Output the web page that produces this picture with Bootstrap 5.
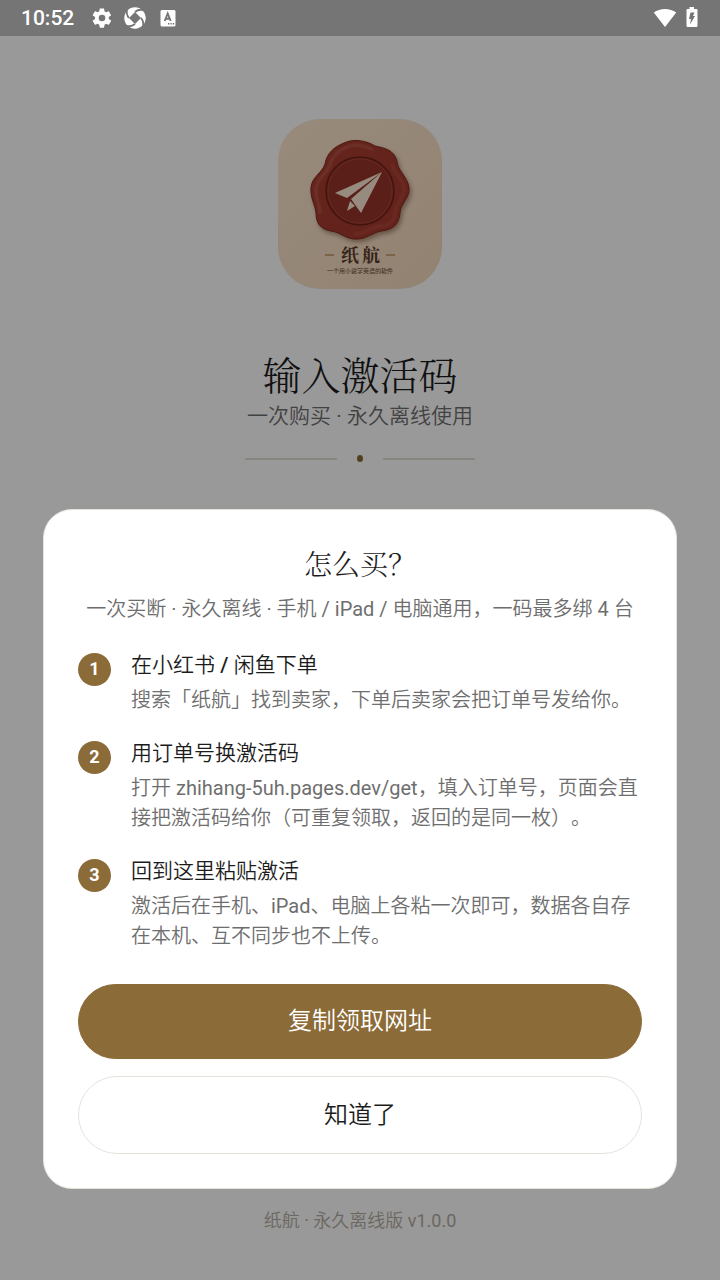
<!DOCTYPE html>
<html lang="zh-CN">
<head>
<meta charset="utf-8">
<meta name="viewport" content="width=device-width, initial-scale=1">
<title>纸航 · 输入激活码</title>
<link href="https://cdn.jsdelivr.net/npm/bootstrap@5.3.0/dist/css/bootstrap.min.css" rel="stylesheet">
<style>
  :root { --brand: #8b6b38; --ink: #1c1c1c; --soft: #6e6e6e; --line: #e4e4dc; }
  body { font-family: Roboto, "Noto Sans CJK SC DemiLight", "Noto Sans CJK SC", sans-serif; color: var(--ink); background: #fff; text-spacing-trim: space-all; }
  .serif { font-family: "Noto Serif CJK SC", "Noto Serif SC", "Liberation Serif", "Noto Sans CJK SC", serif; font-weight: 300; }
  .status-bar { height: 36px; padding: 0 21px 0 21px; background: #757575; color: #fff; z-index: 1060; }
  .status-time { font-size: 21px; line-height: 36px; font-weight: 500; }
  .status-icons { gap: 11px; margin-left: 17px; }
  .app-icon { width: 164px; height: 170px; margin-top: 83px; }
  .app-name { font: 700 18px "Noto Serif CJK SC", "Noto Sans CJK SC", serif; fill: #5b3a2a; }
  .app-tag { font: 500 6px "Noto Sans CJK SC", sans-serif; fill: #7a5c48; }
  .page-title { font-size: 39px; line-height: 56px; margin-top: 56px; }
  .page-sub { font-size: 21px; line-height: 30px; color: var(--soft); }
  .divider { width: 230px; gap: 20px; margin-top: 24px; }
  .divider .rule { height: 2px; background: #e0e0d4; }
  .divider .dot { width: 6px; height: 7px; background: var(--brand); }
  .page-foot { font-size: 18px; line-height: 26px; color: #b4aca2; padding-bottom: 46px; }
  .scrim { background: rgba(0,0,0,.4); }
  .how-modal { padding: 36px 43px 91px; }
  .how-card { border: 1px solid var(--line); border-radius: 29px; padding: 34px; }
  .how-title { font-size: 28px; line-height: 38px; }
  .how-sub { font-size: 20px; line-height: 30px; color: var(--soft); margin-top: 12px; }
  .steps { gap: 23px; margin-top: 26px; }
  .step { gap: 20px; }
  .step-num { width: 33px; height: 33px; margin-top: 3px; background: var(--brand); font-size: 18px; line-height: 31px; font-weight: 700; }
  .step-title { font-size: 21px; line-height: 30px; font-weight: 400; }
  .step-text { font-size: 20px; line-height: 30px; color: var(--soft); margin-top: 5px; }
  .how-btn { font-size: 24px; --bs-btn-border-radius: 40px; }
  .btn-brand { --bs-btn-color: #fff; --bs-btn-bg: var(--brand); --bs-btn-border-color: var(--brand); --bs-btn-hover-color: #fff; --bs-btn-hover-bg: #79592f; --bs-btn-padding-y: 19px; line-height: 35px; margin-top: 33px; }
  .btn-plain { --bs-btn-color: var(--ink); --bs-btn-border-color: var(--line); --bs-btn-hover-bg: #f6f6f2; --bs-btn-padding-y: 20px; line-height: 36px; margin-top: 17px; }
</style>
</head>
<body class="d-flex flex-column min-vh-100">
<header class="status-bar position-sticky top-0 d-flex align-items-center">
  <span class="status-time">10:52</span>
  <div class="status-icons d-flex align-items-center">
    <svg width="22" height="22" viewBox="0 0 24 24" fill="#fff"><path fill-rule="evenodd" d="M19.400 13a7.500 7.500 0 0 0 0-2l2.300-1.700a.5.5 0 0 0 .1-.7l-2.200-3.800a.5.5 0 0 0-.6-.2l-2.600 1a7.300 7.300 0 0 0-1.700-1L14.300 1.900A.5.5 0 0 0 13.800 1.500h-3.800a.5.5 0 0 0-.5.400L9 4.700a7.700 7.700 0 0 0-1.700 1l-2.600-1a.5.5 0 0 0-.6.2L1.900 8.700a.5.5 0 0 0 .1.700L4.400 11a7.900 7.900 0 0 0 0 2L2 14.700a.5.5 0 0 0-.1.700l2.200 3.800c.1.200.4.300.6.200l2.600-1a7.300 7.300 0 0 0 1.700 1l.5 2.700c0 .200.2.400.5.400h3.800c.3 0 .5-.2.500-.4l.5-2.700a7.700 7.700 0 0 0 1.700-1l2.600 1c.2.100.5 0 .6-.2l2.200-3.800a.5.5 0 0 0-.1-.7zM12 15.600a3.600 3.600 0 1 1 0-7.200 3.600 3.600 0 0 1 0 7.200z"/></svg>
    <svg width="22" height="22" viewBox="0 0 22 22"><circle cx="11" cy="11" r="10.700" fill="#fff"/><path d="M11 5 17 11 11 17 5 11z" fill="#757575"/><path d="M11 5Q14.500 2 19 3M17 11Q20 14.500 19 19M11 17Q7.500 20 3 19M5 11Q2 7.500 3 3" fill="none" stroke="#757575" stroke-width="1.800"/></svg>
    <svg width="22" height="22" viewBox="0 0 22 22"><rect x="3.500" y="3" width="15" height="16.500" rx="1.500" fill="#fff"/><path d="M7.700 14 10.700 6.500 13.700 14M8.700 11.700h4" fill="none" stroke="#757575" stroke-width="1.900"/><path d="M11 16.800h1.400M13.400 16.800h1.400M15.800 16.800h1.400" stroke="#757575" stroke-width="1.400"/></svg>
  </div>
  <svg class="ms-auto" width="24" height="20" viewBox="0 0 24 20"><path d="M12 19 .8 4.500C7-.3 17-.3 23.200 4.500z" fill="#fff"/></svg>
  <svg class="ms-2" width="14" height="22" viewBox="0 0 14 22"><path d="M4.500 0H9v2h2.500a1 1 0 0 1 1 1v16a1 1 0 0 1-1 1h-9a1 1 0 0 1-1-1V3a1 1 0 0 1 1-1h2z" fill="#fff"/><path d="M5.500 5.500h4L8 9h2L5 17.500 6 12H4z" fill="#757575"/></svg>
</header>

<main class="flex-grow-1 d-flex flex-column align-items-center text-center">
  <svg class="app-icon" viewBox="0 0 164 170" role="img" aria-label="纸航">
    <defs>
      <linearGradient id="paper" x1="0" y1="0" x2="1" y2="1"><stop offset="0" stop-color="#fde8d0"/><stop offset="1" stop-color="#f4d9bd"/></linearGradient>
      <radialGradient id="wax" cx=".4" cy=".4" r=".7"><stop offset="0" stop-color="#a83e31"/><stop offset="1" stop-color="#a53a2e"/></radialGradient>
      <filter id="soft" x="-20%" y="-20%" width="140%" height="140%"><feGaussianBlur stdDeviation="2.500"/></filter>
      <filter id="sheen" x="-20%" y="-20%" width="140%" height="140%"><feGaussianBlur stdDeviation="1"/></filter>
      <path id="seal" d="M66 24C76 19 89 22 97 27C107 29 116 31 119 42C119 51 130 58 131 69C132 79 122 85 122 94C121 106 114 111 103 112C93 114 88 121 76 120C66 119 62 113 53 112C42 110 38 104 38 94C37 85 32 79 33 68C34 58 44 54 47 45C49 34 56 28 66 24Z"/>
    </defs>
    <rect width="164" height="170" rx="42" fill="url(#paper)"/>
    <use href="#seal" fill="#6e4a30" opacity=".6" transform="translate(2 3)" filter="url(#soft)"/>
    <use href="#seal" fill="url(#wax)" stroke="#84291f" stroke-width="1"/>
    <path d="M42 95C42 84 37 79 38 69C39 60 48 55 52 46C54 37 61 31 69 28C77 24 87 27 95 31" fill="none" stroke="#d07868" stroke-width="2" opacity=".6" filter="url(#sheen)"/>
    <path d="M114 45C115 55 126 60 126 70C126 80 117 85 117 94C116 103 110 107 101 107C91 109 86 116 76 115" fill="none" stroke="#c96354" stroke-width="2" opacity=".5" filter="url(#sheen)"/>
    <circle cx="82" cy="72" r="34" fill="#98342a" stroke="#702019" stroke-width="1.500"/>
    <circle cx="82" cy="72" r="32" fill="none" stroke="#a84539" stroke-width="1"/>
    <path d="M104 53 57 74 69 79zM104 53 73 80 83 94zM72 82 69 92 77 87z" fill="#fbe8d3"/>
    <path d="M47 136h9M108 136h9" stroke="#c2935f" stroke-width="1.500"/>
    <text class="app-name" x="63" y="143">纸</text><text class="app-name" x="84" y="143">航</text>
    <text class="app-tag" x="82" y="154" text-anchor="middle">一个用小说学英语的软件</text>
  </svg>
  <h1 class="page-title serif mb-0">输入激活码</h1>
  <p class="page-sub mb-0">一次购买 · 永久离线使用</p>
  <div class="divider d-flex align-items-center"><span class="rule flex-fill"></span><span class="dot rounded-circle"></span><span class="rule flex-fill"></span></div>
  <footer class="page-foot mt-auto">纸航 · 永久离线版 v1.0.0</footer>
</main>

<div class="scrim modal-backdrop"></div>
<div class="modal how-modal d-flex flex-column justify-content-end" role="dialog" aria-modal="true" aria-labelledby="how-title">
  <section class="how-card bg-white">
    <h2 class="how-title serif text-center mb-0" id="how-title">怎么买？</h2>
    <p class="how-sub text-center mb-0">一次买断 · 永久离线 · 手机 / iPad / 电脑通用，一码最多绑 4 台</p>
    <ol class="steps list-unstyled d-flex flex-column mb-0">
      <li class="step d-flex">
        <span class="step-num rounded-circle text-white text-center flex-shrink-0">1</span>
        <div>
          <h3 class="step-title mb-0">在小红书 <span class="fw-medium">/</span> 闲鱼下单</h3>
          <p class="step-text mb-0">搜索「纸航」找到卖家，下单后卖家会把订单号发给你。</p>
        </div>
      </li>
      <li class="step d-flex">
        <span class="step-num rounded-circle text-white text-center flex-shrink-0">2</span>
        <div>
          <h3 class="step-title mb-0">用订单号换激活码</h3>
          <p class="step-text mb-0">打开 zhihang-5uh.pages.dev/get，填入订单号，页面会直接把激活码给你（可重复领取，返回的是同一枚）。</p>
        </div>
      </li>
      <li class="step d-flex">
        <span class="step-num rounded-circle text-white text-center flex-shrink-0">3</span>
        <div>
          <h3 class="step-title mb-0">回到这里粘贴激活</h3>
          <p class="step-text mb-0">激活后在手机、iPad、电脑上各粘一次即可，数据各自存在本机、互不同步也不上传。</p>
        </div>
      </li>
    </ol>
    <button type="button" class="btn btn-brand how-btn d-block w-100">复制领取网址</button>
    <button type="button" class="btn btn-plain how-btn d-block w-100">知道了</button>
  </section>
</div>
<script src="https://cdn.jsdelivr.net/npm/bootstrap@5.3.0/dist/js/bootstrap.bundle.min.js"></script>
</body>
</html>
